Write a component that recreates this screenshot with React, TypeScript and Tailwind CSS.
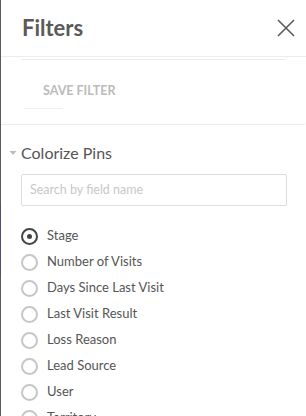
import React from "react";

const items = [
  "Stage",
  "Number of Visits",
  "Days Since Last Visit",
  "Last Visit Result",
  "Loss Reason",
  "Lead Source",
  "User",
  "Territory",
];

export default function App() {
  return (
    <div className="w-[306px] h-[416px] overflow-hidden bg-white font-['Lato',_sans-serif] text-[#555] flex">
      <div className="w-[1px] shrink-0 flex flex-col">
        <div className="h-[205px] shrink-0 bg-[#5a5a5a]" />
        <div className="h-[70px] shrink-0 bg-[#4b5273]" />
        <div className="flex-1 bg-[#5a5a5a]" />
      </div>
      <div className="flex-1 flex flex-col">
        <div className="h-[57px] shrink-0 flex items-center justify-between pl-[21px] pr-[10px] border-b border-[#ececec]">
          <h1 className="text-[22px] font-bold leading-[26px] text-[#5a5a5a] -mt-[1px]">Filters</h1>
          <svg width="20" height="20" viewBox="0 0 20 20" className="-mt-[1px]">
            <path d="M2 2 L18 18 M18 2 L2 18" stroke="#5a5a5a" strokeWidth="1.6" fill="none" />
          </svg>
        </div>
        <div className="shrink-0 mx-[20px] mt-[2px] border-t border-[#ececec]" />
        <div className="h-[64px] shrink-0 flex flex-col pl-[23px]">
          <div className="h-[48px] shrink-0 pl-[19px] pt-[23px]">
            <span className="block text-[12.5px] leading-[16px] font-bold text-[#bbb]">SAVE FILTER</span>
          </div>
          <div className="w-[39px] shrink-0 border-t border-[#efefef]" />
        </div>
        <div className="shrink-0 border-t border-[#ececec] mr-[1px]" />
        <div className="shrink-0 flex items-center h-[20px] mt-[18px]">
          <svg width="8" height="6" viewBox="0 0 8 6" className="ml-[8px] mr-[4px]">
            <path d="M0.5 1 L7.5 1 L4 5 Z" fill="#bbb" />
          </svg>
          <span className="text-[16px] leading-[20px] text-[#555]">Colorize Pins</span>
        </div>
        <div className="shrink-0 mt-[11px] ml-[20px] w-[266px] h-[32px] border border-[#ddd] rounded-[2px] flex items-center pl-[8px]">
          <span className="text-[12.5px] text-[#c8c8c8]">Search by field name</span>
        </div>
        <div className="shrink-0 mt-[17px] ml-[20px] flex flex-col">
          {items.map((it, i) => (
            <div key={it} className="h-[26px] shrink-0 flex items-center">
              {i === 0 ? (
                <div className="w-[17px] h-[17px] rounded-full border-2 border-[#444] flex items-center justify-center">
                  <div className="w-[5px] h-[5px] rounded-full bg-[#444]" />
                </div>
              ) : (
                <div className="w-[17px] h-[17px] rounded-full border-2 border-[#c6c6c6]" />
              )}
              <span className="ml-[9px] text-[13px] text-[#555]">{it}</span>
            </div>
          ))}
        </div>
      </div>
    </div>
  );
}
